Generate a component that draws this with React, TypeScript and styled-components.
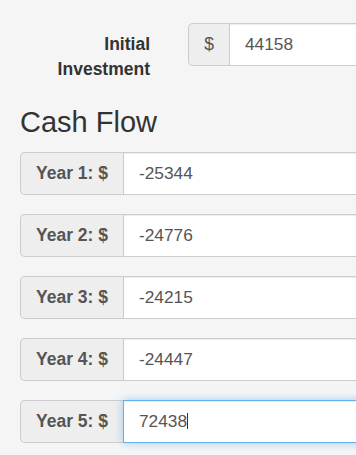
import React from 'react'
import styled, { createGlobalStyle, css } from 'styled-components'

const GlobalStyle = createGlobalStyle`
  html, body {
    margin: 0;
    padding: 0;
    background: #f5f5f5;
    overflow: hidden;
  }
  body {
    font-family: "Liberation Sans", Arial, Helvetica, sans-serif;
    color: #333;
  }
`

const Page = styled.div`
  padding: 23px 0 0 20px;
  width: 420px;
`

const InvestmentRow = styled.div`
  display: flex;
  align-items: flex-start;
`

const ControlLabel = styled.label`
  flex-shrink: 0;
  width: 130px;
  margin-right: 38px;
  padding-top: 9px;
  text-align: right;
  font-size: 17.5px;
  line-height: 25px;
  font-weight: bold;
  color: #333;
`

const InputGroup = styled.div<{ width?: number }>`
  display: flex;
  flex-shrink: 0;
  height: 43px;
  width: ${({ width = 400 }) => width}px;
  margin-bottom: ${({ width }) => (width ? 0 : 19)}px;
`

const Addon = styled.span<{ bold?: boolean; size?: number }>`
  display: flex;
  align-items: center;
  justify-content: center;
  box-sizing: border-box;
  width: ${({ size = 103 }) => size}px;
  flex-shrink: 0;
  background: #eee;
  border: 1px solid #ccc;
  border-right: 0;
  border-radius: 5px 0 0 5px;
  color: #555;
  font-size: 17.5px;
  font-weight: ${({ bold }) => (bold ? 'bold' : 'normal')};
`

const FieldWrap = styled.div`
  position: relative;
  flex: 1;
  display: flex;
`

const Field = styled.input<{ focused?: boolean }>`
  flex: 1;
  min-width: 0;
  box-sizing: border-box;
  height: 100%;
  margin: 0;
  padding: 0 15px;
  border: 1px solid #ccc;
  border-radius: 0;
  background: #fff;
  color: #555;
  font-family: inherit;
  font-size: 17.3px;
  outline: none;
  box-shadow: inset 0 1px 1px rgba(0, 0, 0, 0.075);
  ${({ focused }) =>
    focused &&
    css`
      border-color: #66afe9;
      box-shadow: inset 0 1px 1px rgba(0, 0, 0, 0.075), 0 0 8px rgba(102, 175, 233, 0.6);
    `}
`

const Caret = styled.span<{ left: number }>`
  position: absolute;
  left: ${({ left }) => left}px;
  top: 13px;
  width: 1px;
  height: 16px;
  background: #333;
`

const Heading = styled.h2`
  margin: 25px 0 13px;
  font-size: 29px;
  font-weight: normal;
  line-height: 1.1;
  color: #333;
`

const flows = [
  { year: 1, value: '-25344' },
  { year: 2, value: '-24776' },
  { year: 3, value: '-24215' },
  { year: 4, value: '-24447' },
  { year: 5, value: '72438', focused: true },
]

export default function App() {
  return (
    <>
      <GlobalStyle />
      <Page>
        <InvestmentRow>
          <ControlLabel>
            Initial
            <br />
            Investment
          </ControlLabel>
          <InputGroup width={220}>
            <Addon size={41}>$</Addon>
            <FieldWrap>
              <Field defaultValue="44158" />
            </FieldWrap>
          </InputGroup>
        </InvestmentRow>

        <Heading>Cash Flow</Heading>

        {flows.map((f) => (
          <InputGroup key={f.year}>
            <Addon bold>Year {f.year}: $</Addon>
            <FieldWrap>
              <Field defaultValue={f.value} focused={f.focused} />
              {f.focused && <Caret left={64} />}
            </FieldWrap>
          </InputGroup>
        ))}
      </Page>
    </>
  )
}
